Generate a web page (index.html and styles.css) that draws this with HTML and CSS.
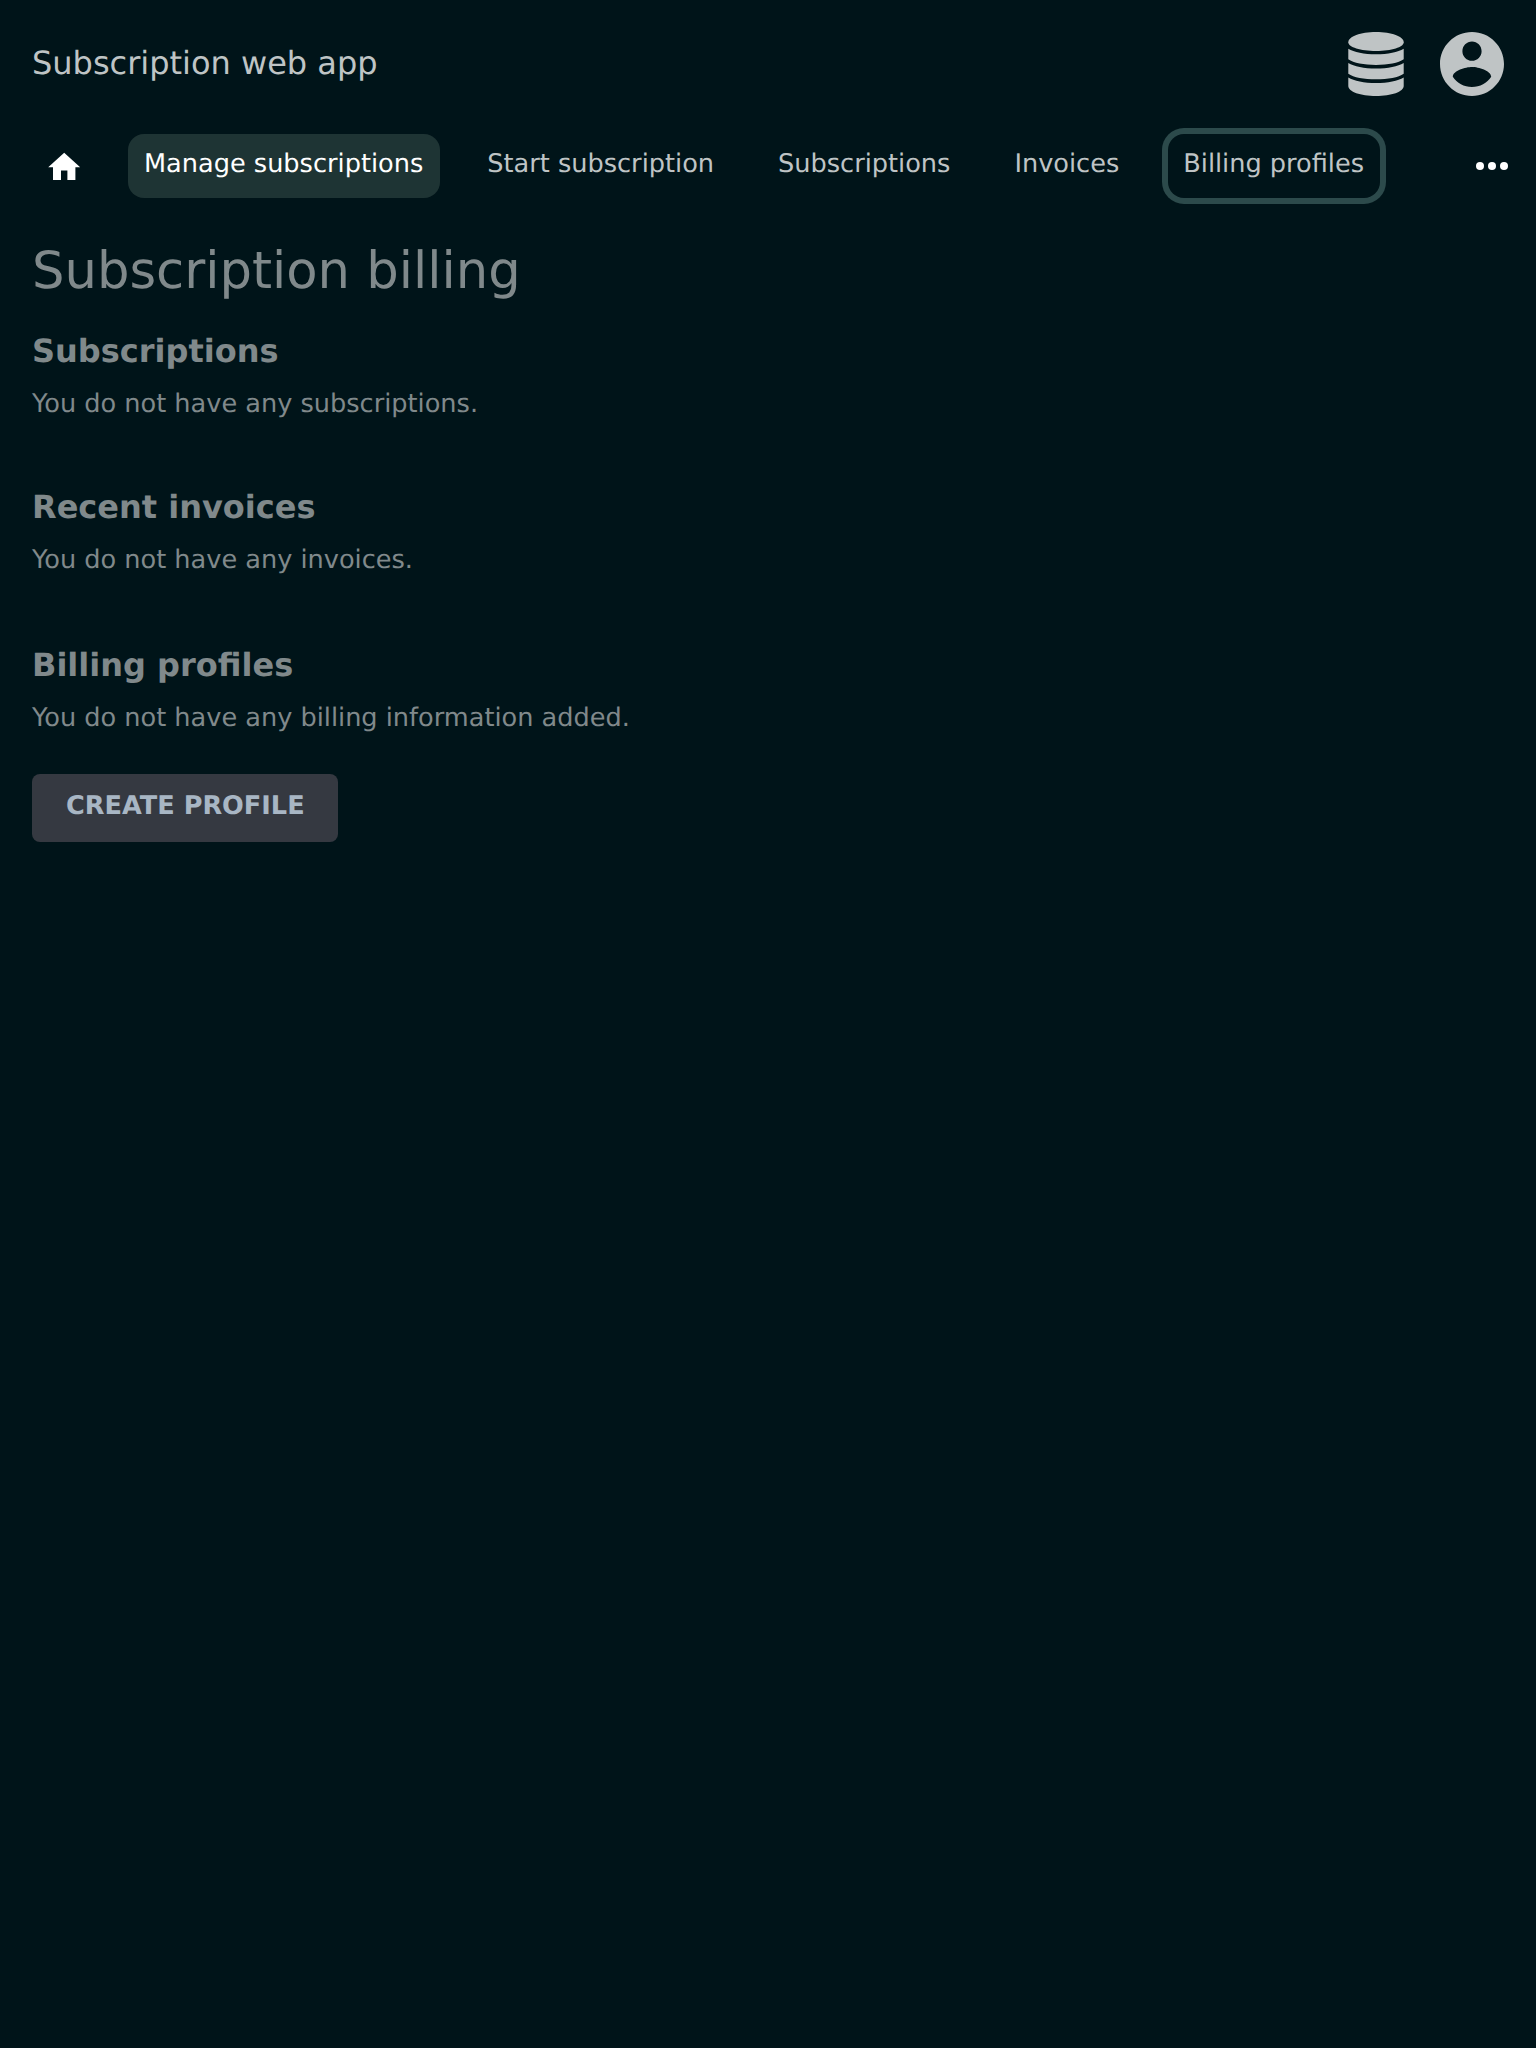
FILE: index.html
```html
<!DOCTYPE html>
<html lang="en">
<head>
<meta charset="utf-8">
<title>Subscription web app</title>
<link rel="stylesheet" href="styles.css">
</head>
<body>
<header class="header">
  <span class="app-name">Subscription web app</span>
  <div class="menus">
    <svg class="icon-db" viewBox="0 0 56 64"><path d="M28 0C43.500 0 55.700 4.500 55.700 10.200C55.700 15.200 43.500 18.900 28 18.900S.3 15.200 .3 10.200C.3 4.500 12.500 0 28 0Z"/><path d="M.3 16.700C6 20.200 16 22.200 28 22.200S50 20.200 55.700 16.700V27.300C50.500 31 40 32.900 28 32.900S5.500 31 .3 27.300Z"/><path d="M.3 31C6 34.500 16 36.500 28 36.500S50 34.500 55.700 31V41.700C50.500 45.400 40 47.300 28 47.300S5.500 45.400 .3 41.700Z"/><path d="M.3 45.400C6 48.900 16 50.900 28 50.900S50 48.900 55.700 45.400V54C55.700 59.700 43.500 64 28 64S.3 59.700 .3 54Z"/></svg>
    <svg class="icon-account" viewBox="2 2 20 20"><path d="M12 2C6.480 2 2 6.480 2 12s4.480 10 10 10 10-4.480 10-10S17.520 2 12 2zm0 3c1.660 0 3 1.340 3 3s-1.340 3-3 3-3-1.340-3-3 1.340-3 3-3zm0 14.200c-2.500 0-4.710-1.280-6-3.220.030-1.990 4-3.080 6-3.080 1.990 0 5.970 1.090 6 3.080-1.290 1.940-3.500 3.220-6 3.220z"/></svg>
  </div>
</header>
<nav class="nav">
  <a class="home"><svg class="icon-home" viewBox="0 0 24 24"><path d="M10 20v-6h4v6h5v-8h3L12 3 2 12h3v8z"/></svg></a>
  <a class="link link-current">Manage subscriptions</a>
  <a class="link">Start subscription</a>
  <a class="link">Subscriptions</a>
  <a class="link">Invoices</a>
  <a class="link link-focus">Billing profiles</a>
  <a class="more"><svg class="icon-more" viewBox="0 0 24 24"><circle cx="6" cy="12" r="2"/><circle cx="12" cy="12" r="2"/><circle cx="18" cy="12" r="2"/></svg></a>
</nav>
<main class="content">
  <h1 class="title">Subscription billing</h1>
  <section class="section"><h2 class="heading">Subscriptions</h2><p class="text">You do not have any subscriptions.</p></section>
  <section class="section"><h2 class="heading">Recent invoices</h2><p class="text">You do not have any invoices.</p></section>
  <section class="section section-profiles"><h2 class="heading">Billing profiles</h2><p class="text">You do not have any billing information added.</p>
  <a class="button">Create profile</a></section>
</main>
</body>
</html>
```
FILE: styles.css
```css
* { box-sizing: border-box; margin: 0; padding: 0; }
body { background: #001419; font-family: "DejaVu Sans", sans-serif; font-size: 25.6px; text-rendering: geometricPrecision; min-height: 100vh; }
svg { display: block; }
.header { display: flex; justify-content: space-between; align-items: center; height: 128px; padding: 0 32px; color: #bfc4c5; }
.app-name { font-size: 32px; line-height: 40px; padding-bottom: 2px; }
.menus { display: flex; align-items: center; gap: 36px; fill: #bfc4c5; }
.icon-db { width: 56px; height: 64px; }
.icon-account { width: 64px; height: 64px; }
.nav { display: flex; gap: 32px; height: 64px; margin-top: 6px; padding: 0 12px 0 32px; color: #bfc4c5; fill: #fff; }
.home { display: flex; justify-content: center; align-items: center; width: 64px; padding-top: 2px; }
.icon-home { width: 38.4px; height: 38.4px; }
.link { padding: 0 16px; border-radius: 16px; line-height: 61px; white-space: nowrap; }
.link-current { background: #1e3434; color: #fff; padding-right: 16.5px; }
.link-current + .link { margin-left: -0.500px; }
.link-focus { margin-left: 0.8px; padding-left: 15.2px; box-shadow: 0 0 0 6px #2c4a4b; }
.more { display: flex; align-items: center; margin-left: auto; padding-right: 8px; }
.icon-more { width: 48px; height: 48px; }
.content { padding: 43px 32px 0; color: #80898b; }
.title { font-size: 51.200px; font-weight: 400; line-height: 60px; margin-bottom: 30px; }
.section { margin-bottom: 65px; }
.section-profiles { margin-top: 67px; }
.heading { font-size: 32px; line-height: 40px; margin-bottom: 15px; }
.text { line-height: 36px; }
.button { display: inline-block; height: 68px; margin-top: 38px; padding: 0 33px 0 34px; border-radius: 8px; background: #353941; color: #a8b6c4; font-weight: 700; line-height: 65px; text-transform: uppercase; }
```
